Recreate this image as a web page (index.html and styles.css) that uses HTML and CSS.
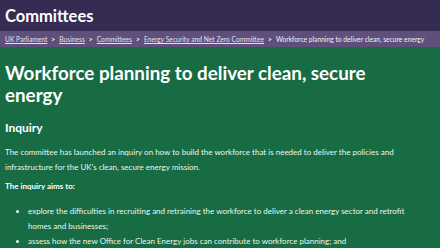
FILE: index.html
```html
<!DOCTYPE html>
<html lang="en">

<head>
	<meta charset="UTF-8">
	<meta name="viewport" content="width=device-width, initial-scale=1.0">
	<title>Workforce planning to deliver clean, secure energy - Committees</title>
	<link rel="stylesheet" href="styles.css">
</head>

<body>
	<header class="masthead">
		<a class="site-name" href="#">Committees</a>
	</header>
	<nav class="crumbs">
		<a href="#">UK Parliament</a>
		<span class="sep">&gt;</span>
		<a href="#">Business</a>
		<span class="sep">&gt;</span>
		<a href="#">Committees</a>
		<span class="sep">&gt;</span>
		<a href="#">Energy Security and Net Zero Committee</a>
		<span class="sep">&gt;</span>
		<span class="current">Workforce planning to deliver clean, secure energy</span>
	</nav>
	<main class="hero">
		<h1>Workforce planning to deliver clean, secure energy</h1>
		<h2>Inquiry</h2>
		<p>The committee has launched an inquiry on how to build the workforce that is needed to deliver the policies and infrastructure for the UK’s clean, secure energy mission.</p>
		<p class="lead">The inquiry aims to:</p>
		<ul>
			<li>explore the difficulties in recruiting and retraining the workforce to deliver a clean energy sector and retrofit homes and businesses;</li>
			<li>assess how the new Office for Clean Energy jobs can contribute to workforce planning; and</li>
			<li>consider how the transition can be fair for workers in high-carbon industries.</li>
		</ul>
	</main>
</body>

</html>
```

FILE: styles.css
```css
* {
	margin: 0;
	padding: 0;
	box-sizing: border-box;
}

body {
	font-family: Lato, "Noto Sans", sans-serif;
	background-color: #176c43;
	color: #fff;
}

.masthead {
	height: 31px;
	background-color: #362b52;
	padding: 0 5px;
	display: flex;
	align-items: center;
}

.site-name {
	color: #fff;
	text-decoration: none;
	font-size: 16.5px;
	font-weight: 700;
}

.crumbs {
	height: 16px;
	background-color: #5e507b;
	padding: 0 5px;
	display: flex;
	align-items: center;
	font-size: 6.7px;
	white-space: nowrap;
	overflow: hidden;
}

.crumbs a {
	color: #e4e0ec;
}

.crumbs .sep {
	margin: 0 4px;
	color: #fff;
	font-weight: 700;
}

.crumbs .current {
	color: #f2f0f6;
}

.hero {
	max-width: 415px;
	padding: 15px 5px 0;
}

h1 {
	font-size: 18.8px;
	line-height: 22px;
	font-weight: 700;
	margin-bottom: 14px;
}

h2 {
	font-size: 12px;
	font-weight: 700;
	margin-bottom: 10px;
}

p {
	font-size: 8px;
	line-height: 15px;
	margin-bottom: 4px;
	color: #eef5ee;
}

p.lead {
	font-weight: 700;
	color: #fff;
	margin-bottom: 10px;
}

ul {
	padding-left: 23px;
	font-size: 8px;
	line-height: 15px;
	color: #eef5ee;
}
```
